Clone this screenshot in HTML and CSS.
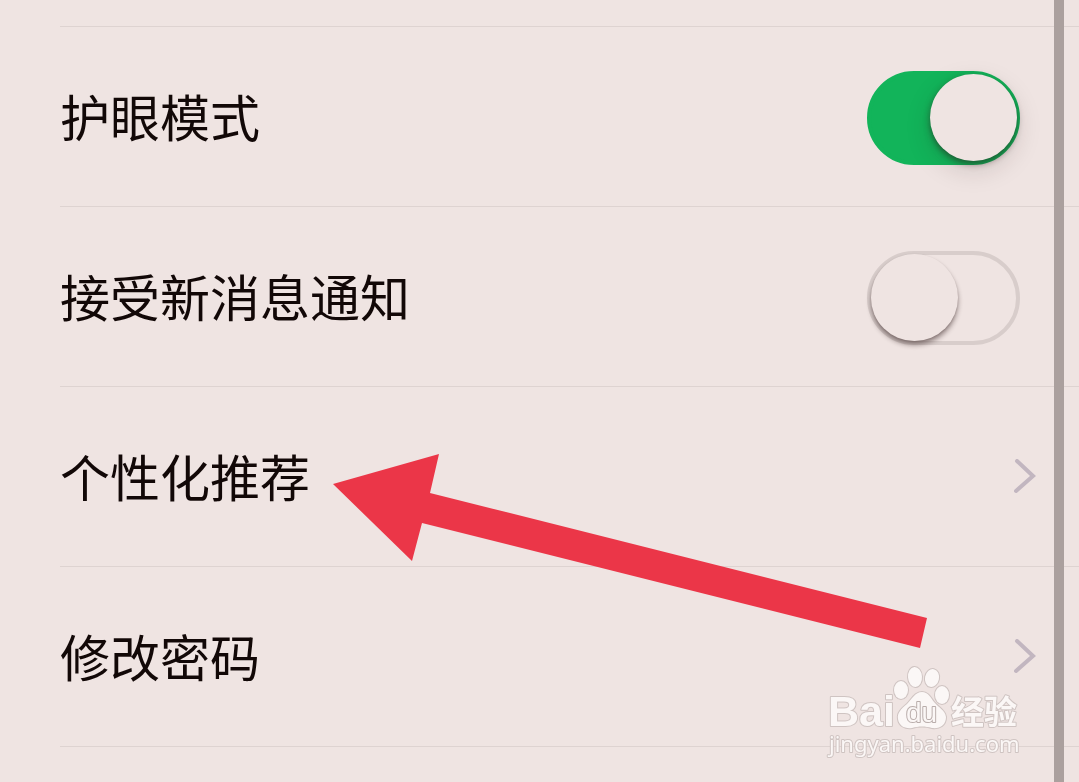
FILE: index.html
```html
<!DOCTYPE html>
<html lang="zh-CN">
<head>
    <meta charset="UTF-8">
    <meta name="viewport" content="width=device-width, initial-scale=1">
    <title>设置</title>
    <link rel="stylesheet" href="styles.css">
</head>
<body>

    <main class="settings">
        <div class="row-end"></div>
        <div class="row">
            <label class="name" for="eyeCare">护眼模式</label>
            <input type="checkbox" id="eyeCare" class="switch" checked>
        </div>
        <div class="row">
            <label class="name" for="notify">接受新消息通知</label>
            <input type="checkbox" id="notify" class="switch">
        </div>
        <a class="row" href="#recommend">
            <span class="name">个性化推荐</span>
            <svg class="chevron" viewBox="0 0 22 36" aria-hidden="true"><path d="M3 2 L19 17 L2 32"/></svg>
        </a>
        <a class="row" href="#password">
            <span class="name">修改密码</span>
            <svg class="chevron" viewBox="0 0 22 36" aria-hidden="true"><path d="M3 2 L19 17 L2 32"/></svg>
        </a>

        <!-- arrow pointing at the recommendation row -->
        <svg class="arrow" viewBox="0 0 595 107" aria-hidden="true">
            <polygon points="0,30 106,0 97,39 594,164 587,194 89,69 79,107"/>
        </svg>
    </main>

    <div class="scrollbar"></div>

    <svg class="watermark" viewBox="0 0 200 96" role="img" aria-label="Baidu 经验">
        <text class="wm-bai" x="4" y="58">Bai</text>
        <g class="wm-paw">
            <ellipse cx="77" cy="22" rx="7" ry="9"/>
            <ellipse cx="91" cy="9" rx="7" ry="10" transform="rotate(-4 91 9)"/>
            <ellipse cx="108" cy="10" rx="7" ry="9" transform="rotate(12 108 10)"/>
            <ellipse cx="118" cy="27" rx="7" ry="9"/>
            <path d="M98 24 C91 24 88 31 83 36 C77 41 73 45 74 51 C75 58 81 61 88 60 C95 58 101 58 108 60 C116 61 122 57 122 49 C121 42 115 40 110 34 C107 30 104 24 98 24 Z"/>
        </g>
        <text class="wm-du" x="82" y="54">du</text>
        <text class="wm-cjk" x="127" y="56">经验</text>
        <text class="wm-url" x="5" y="84">jingyan.baidu.com</text>
    </svg>

</body>
</html>
```

FILE: styles.css
```css
body {
    margin: 0;
    min-height: 100vh;
    overflow: hidden;
    background: #efe4e2;
    color: #120807;
    font-family: "Noto Sans CJK SC", sans-serif;
}

.settings {
    position: relative;
    padding-left: 60px;
}

.row-end {
    height: 26px;
    border-bottom: 1px solid #ded3d1;
}

.row {
    display: flex;
    align-items: center;
    justify-content: space-between;
    box-sizing: border-box;
    height: 180px;
    padding-right: 59px;
    border-bottom: 1px solid #ded3d1;
    color: inherit;
    text-decoration: none;
}

a.row {
    padding-right: 43px;
}

.name {
    padding-bottom: 4px;
    font-size: 50px;
    font-weight: 400;
    line-height: 72px;
}

/* switch */
.switch {
    appearance: none;
    position: relative;
    box-sizing: border-box;
    width: 153px;
    height: 94px;
    margin: 2px 0 0;
    border: 4px solid #d8cdcb;
    border-radius: 47px;
}

.switch::before {
    content: "";
    position: absolute;
    top: -1px;
    left: 0;
    width: 87px;
    height: 87px;
    border-radius: 50%;
    background: #efe4e2;
    box-shadow: 0 4px 5px rgba(40, 20, 20, 0.45), 0 1px 2px rgba(40, 20, 20, 0.15);
}

.switch:checked {
    border-color: #12b45a;
    background: #12b45a;
}

.switch:checked::before {
    top: -1px;
    left: 59px;
    box-shadow: 0 3px 6px rgba(40, 20, 20, 0.5), 0 9px 26px rgba(40, 20, 20, 0.15);
}

.chevron {
    width: 22px;
    height: 36px;
    fill: none;
    stroke: #c2b6c0;
    stroke-width: 4;
    stroke-linecap: round;
}

.arrow {
    position: absolute;
    top: 454px;
    left: 333px;
    width: 595px;
    height: 107px;
    overflow: visible;
    fill: #eb3648;
    pointer-events: none;
}

.scrollbar {
    position: fixed;
    top: 0;
    right: 15px;
    bottom: 0;
    width: 10px;
    background: #aba09e;
}

/* watermark */
.watermark {
    position: fixed;
    right: 55px;
    bottom: 18px;
    width: 200px;
    height: 96px;
    overflow: visible;
    fill: #fbf7f6;
    stroke: #cfc4c2;
    stroke-width: 2;
    paint-order: stroke;
    stroke-linejoin: round;
}

.wm-bai {
    font: bold 43px "Liberation Sans", sans-serif;
}

.wm-du {
    font: 28px "Liberation Sans", sans-serif;
    stroke: #b9adab;
}

.wm-cjk {
    font: bold 33px "Noto Sans CJK SC", sans-serif;
}

.wm-url {
    font: 22px "Noto Sans", sans-serif;
}
```
